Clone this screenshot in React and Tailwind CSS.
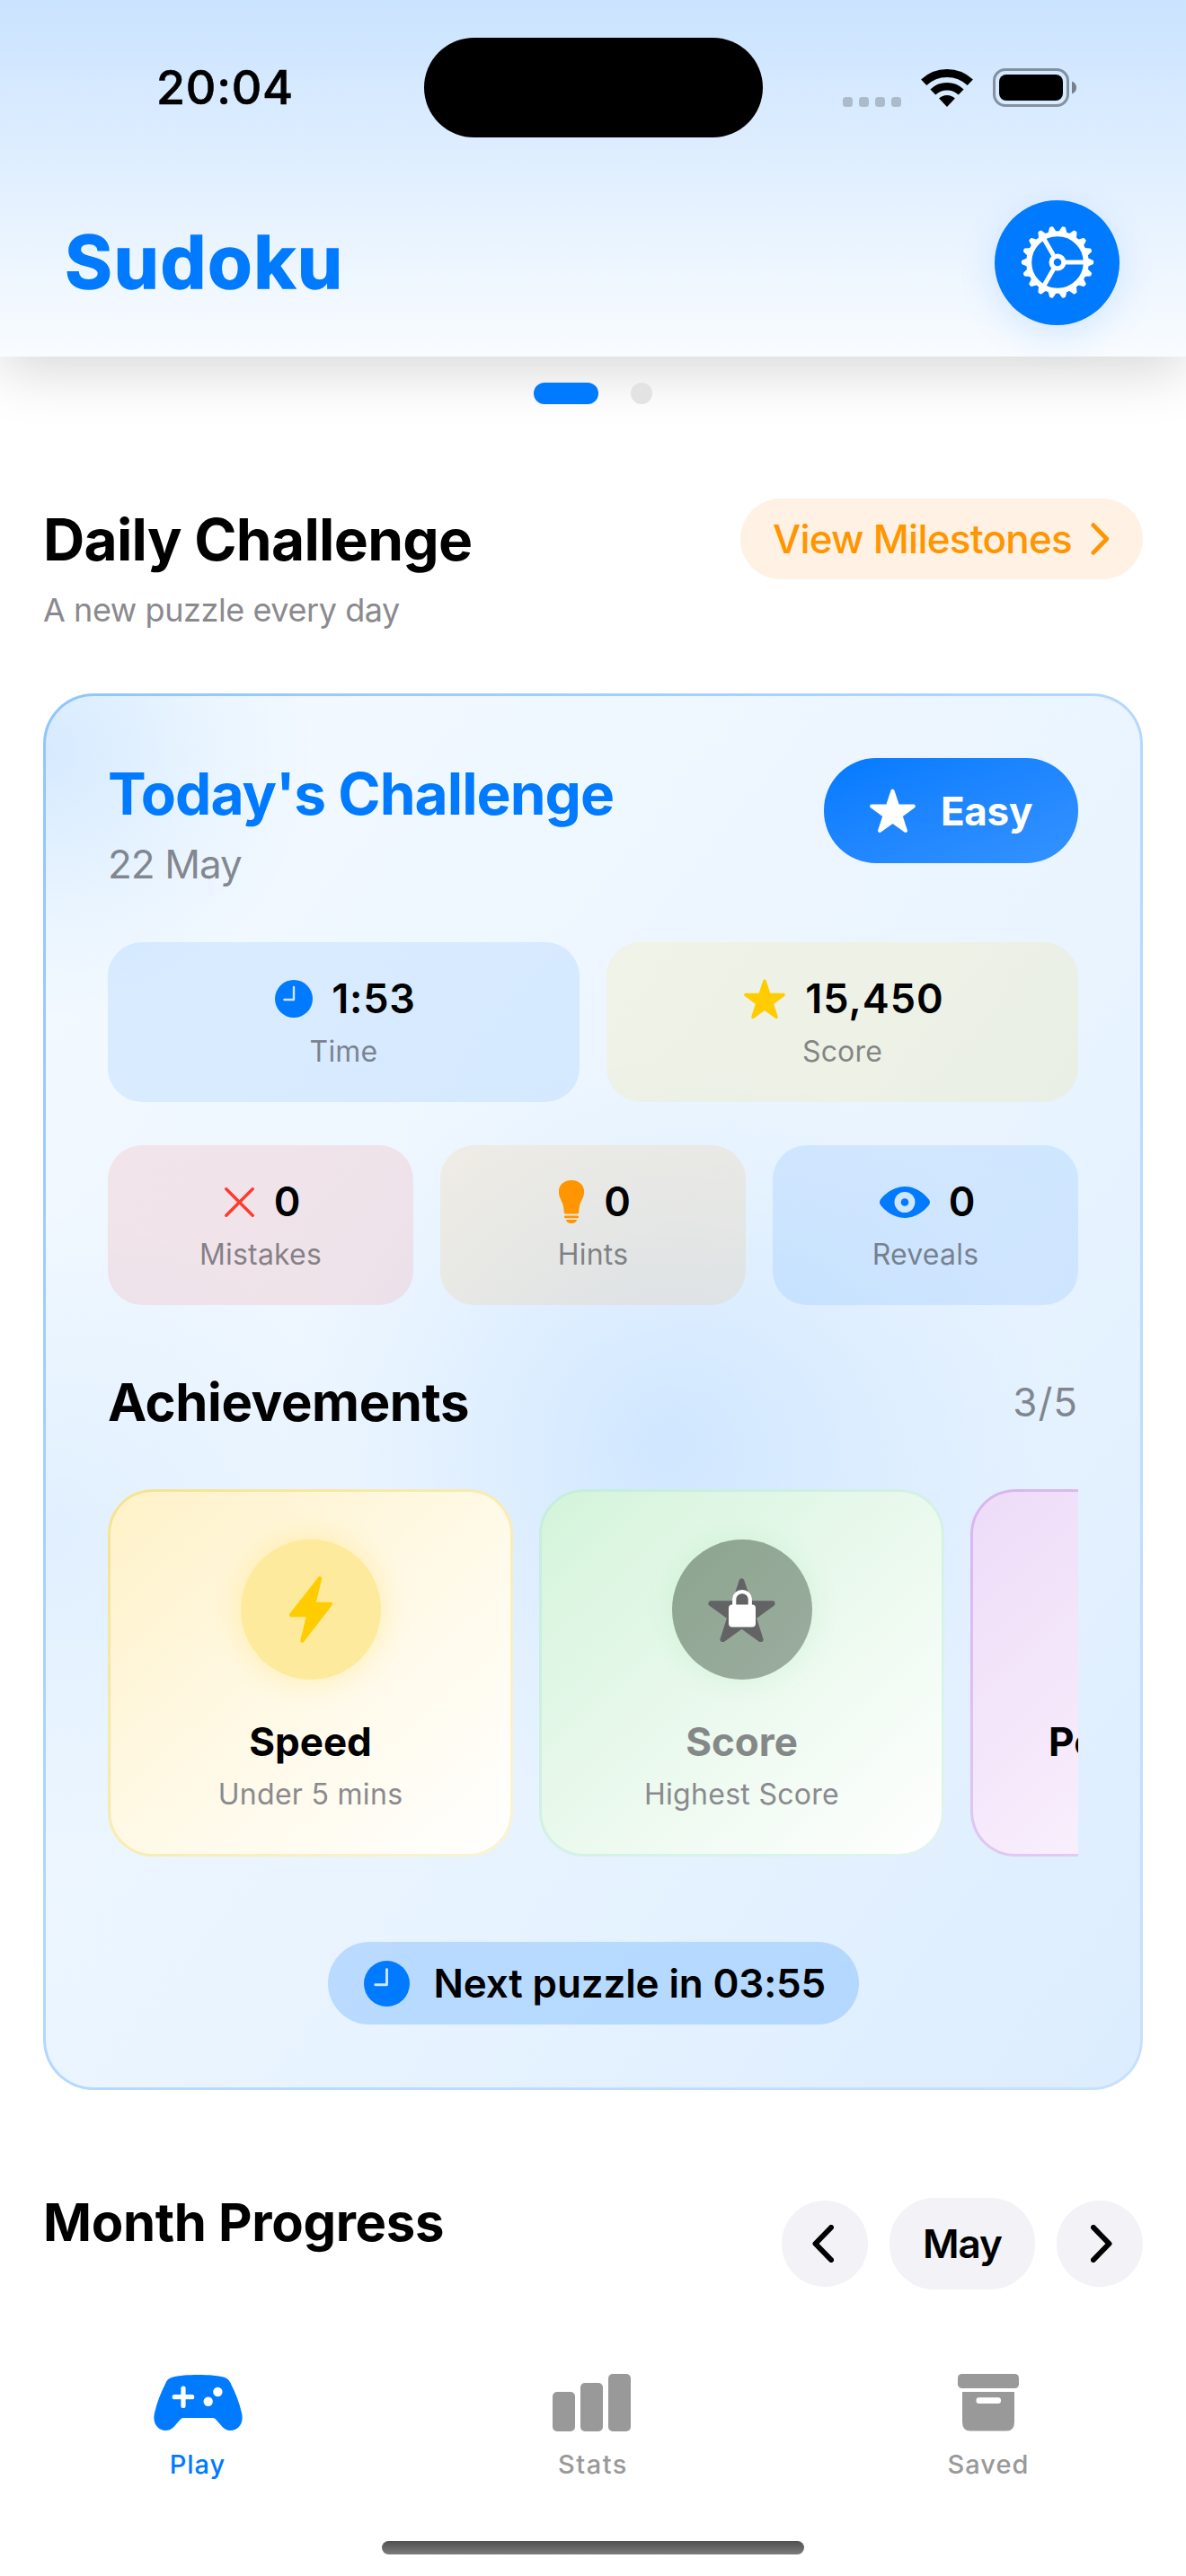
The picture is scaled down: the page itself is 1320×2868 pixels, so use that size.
import React from "react";

function Star({ className }) {
  const pts = Array.from({ length: 10 }, (_, i) => {
    const r = i % 2 ? 18.5 : 48;
    const a = (Math.PI / 5) * i - Math.PI / 2;
    return `${(50 + r * Math.cos(a)).toFixed(2)},${(52.6 + r * Math.sin(a)).toFixed(2)}`;
  }).join(" ");
  return (
    <svg viewBox="0 0 100 95" className={className} fill="currentColor" stroke="currentColor" strokeWidth="8" strokeLinejoin="round">
      <polygon points={pts} />
    </svg>
  );
}

function Gear() {
  const teeth = Array.from({ length: 18 }, (_, i) => i * 20);
  return (
    <svg viewBox="-42 -42 84 84" className="size-[84px] text-white" fill="none" stroke="currentColor">
      <circle r="31.8" strokeWidth="6" />
      <circle r="6.9" strokeWidth="5.2" />
      {[0, 120, 240].map((a) => (
        <path key={a} d="M9 0H31" strokeWidth="5" transform={`rotate(${a})`} />
      ))}
      {teeth.map((a) => (
        <path key={a} d="M33 -3.6L38.8 -1V1L33 3.6Z" fill="currentColor" strokeWidth="2.6" strokeLinejoin="round" transform={`rotate(${a})`} />
      ))}
    </svg>
  );
}

function Clock({ className }) {
  return (
    <svg viewBox="0 0 42 42" className={className}>
      <circle cx="21" cy="21" r="21" fill="#007aff" />
      <path d="M21 8V22H10.5" fill="none" stroke="#cfe6ff" strokeWidth="2.4" strokeLinecap="round" strokeLinejoin="round" />
    </svg>
  );
}

function Cross() {
  return (
    <svg viewBox="0 0 33 33" className="size-[33px]" stroke="#ff3b30" strokeWidth="3.4" strokeLinecap="round">
      <path d="M1.8 1.8L31.2 31.2M31.2 1.8L1.8 31.2" />
    </svg>
  );
}

function Bulb() {
  return (
    <svg viewBox="0 0 28 48" className="h-12 w-7 -my-2" fill="#ff9500">
      <path d="M14 0C22.5 0 28.2 5.6 28.200 13C28 19.500 24.500 22.500 23.200 28C22.300 32 22.400 34 22.200 36Q22 37.400 20.700 37.400H7.300Q6 37.400 5.800 36C5.600 34 5.700 32 4.800 28C3.500 22.500 0 19.500 -0.200 13C-0.200 5.600 5.500 0 14 0Z" />
      <rect x="6" y="39.400" width="16" height="2.800" rx="1.200" />
      <path d="M7.800 44H20.200Q19 48 14 48T7.800 44Z" />
    </svg>
  );
}

function Eye() {
  return (
    <svg viewBox="0 0 56 35" className="h-[35px] w-14" fill="#007aff" fillRule="evenodd">
      <path d="M28 0C42 0 51.500 10 55 14.500Q57 17.500 55 20.500C51.500 25 42 35 28 35S4.500 25 1 20.500Q-1 17.500 1 14.500C4.500 10 14 0 28 0ZM28 6A11.500 11.500 0 1 0 28 29A11.500 11.500 0 1 0 28 6Z" />
      <circle cx="28" cy="17.500" r="4.300" />
    </svg>
  );
}

function Bolt() {
  return (
    <svg viewBox="0 0 48 74" className="h-[74px] w-12" fill="#ffcc00" stroke="#ffcc00" strokeWidth="4.500" strokeLinejoin="round">
      <path d="M34 2.500L27 31H45.700L14.500 71.500L21.500 43H2.300Z" />
    </svg>
  );
}

function LockedStar() {
  return (
    <div className="grid place-items-center text-[#636366] [&>*]:[grid-area:1/1]">
      <Star className="h-[71px] w-[75px]" />
      <svg viewBox="0 0 30 42" className="h-[42px] w-[30px] -mt-0.5">
        <rect y="16.500" width="30" height="25" rx="4" fill="#fff" />
        <path d="M6.200 18V11C6.200 -0.800 23.800 -0.800 23.800 11V18" fill="none" stroke="#fff" strokeWidth="4.200" />
      </svg>
    </div>
  );
}

function StatusIcons() {
  return (
    <div className="flex items-center">
      <div className="mt-[31px] flex gap-[7px]">
        {[0, 1, 2, 3].map((i) => (
          <span key={i} className="size-[11px] rounded-[3.500px] bg-black/20" />
        ))}
      </div>
      <svg viewBox="0 0 58 42" className="ml-[22px] h-[42px] w-[58px]" fill="none" stroke="#000">
        <path d="M3.200 14.800A37.500 37.500 0 0 1 54.800 14.800" strokeWidth="9" />
        <path d="M13.300 25.500A22.800 22.800 0 0 1 44.700 25.500" strokeWidth="8.400" />
        <path d="M29 42L20.100 32.600A13 13 0 0 1 37.900 32.600Z" fill="#000" stroke="none" />
      </svg>
      <svg viewBox="0 0 94 43" className="ml-[22px] h-[43px] w-[94px]">
        <rect x="1.500" y="1.500" width="82" height="40" rx="12.500" fill="none" stroke="#000" strokeOpacity=".38" strokeWidth="3" />
        <rect x="7" y="7" width="71" height="29" rx="8" fill="#000" />
        <path d="M88 14.500Q93 16.500 93 21.500T88 28.500Z" fill="#000" fillOpacity=".45" />
      </svg>
    </div>
  );
}

function Chevron({ left, className }) {
  return (
    <svg viewBox="0 0 24 42" className={className} fill="none" stroke="currentColor" strokeLinecap="round" strokeLinejoin="round">
      <path d={left ? "M21 3L3.500 21L21 39" : "M3 3L20.500 21L3 39"} />
    </svg>
  );
}

function Tile({ icon, value, label, color, gap = "gap-[21px]", ls = "tracking-normal" }) {
  return (
    <div className={`flex h-[178px] flex-1 flex-col items-center rounded-[38px] pt-9 ${color}`}>
      <div className={`flex h-[54px] items-center pl-1 ${gap}`}>
        {icon}
        <span className={`text-[45px] leading-[54px] font-semibold ${ls}`}>{value}</span>
      </div>
      <div className="mt-3 text-[32px] leading-10 tracking-[0.2px] text-[#3c3c43]/60">{label}</div>
    </div>
  );
}

function Badge({ frame, card, circle, icon, title, text, titleColor = "text-black" }) {
  return (
    <div className={`h-[409px] w-[451px] shrink-0 rounded-[50px] p-[3px] ${frame}`}>
      <div className={`flex h-full flex-col items-center rounded-[47px] pt-[53px] ${card}`}>
        <div className={`grid size-[156px] shrink-0 place-items-center rounded-full ${circle}`}>{icon}</div>
        <div className={`mt-[41px] text-[44px] leading-[56px] font-bold whitespace-nowrap ${titleColor}`}>{title}</div>
        <div className="mt-[11px] text-[32px] leading-10 tracking-[0.3px] whitespace-nowrap text-[#8a8a8e]">{text}</div>
      </div>
    </div>
  );
}

function Header() {
  return (
    <header className="relative z-10 h-[397px] bg-linear-to-b from-[#cae3ff] to-[#f9fcff] shadow-[0_15px_60px_rgba(0,0,0,0.16)]">
      <div className="flex h-[195px] items-center pr-[121px] pl-[174px]">
        <div className="w-[298px] text-[52px] leading-[60px] font-medium tracking-[0.76px] [-webkit-text-stroke:0.600px_#000]">20:04</div>
        <div className="h-[111px] w-[377px] rounded-full bg-black" />
        <div className="ml-auto"><StatusIcons /></div>
      </div>
      <div className="flex h-[194px] items-center justify-between px-[74px]">
        <h1 className="-ml-[2px] text-[81px] leading-[96px] font-bold tracking-[1.500px] text-[#007aff] [-webkit-text-stroke:1.500px_#007aff]">Sudoku</h1>
        <button className="grid size-[139px] place-items-center rounded-full bg-[#007aff] shadow-[0_12px_44px_rgba(0,122,255,0.14)]">
          <Gear />
        </button>
      </div>
    </header>
  );
}

function TodayCard() {
  return (
    <section className="mt-[71px] h-[1555px] rounded-[56px] bg-linear-to-br from-[#8fc5ff] via-[#b4d8ff] to-[#c6e1ff] p-[3px]">
      <div className="h-full rounded-[53px] px-[69px] pt-[69px] [background:radial-gradient(circle_300px_at_0_60px,rgba(0,122,255,0.12),rgba(0,122,255,0.03)_65%,transparent),radial-gradient(circle_430px_at_690px_830px,rgba(0,122,255,0.11),rgba(0,122,255,0.03)_65%,transparent),radial-gradient(circle_360px_at_0_930px,rgba(0,122,255,0.06),transparent),linear-gradient(to_bottom_right,#f4faff,#ebf5ff_50%,#dcedff)]">
        <div className="flex h-[205px] items-start justify-between">
          <div>
            <h3 className="mt-[2px] text-[64px] leading-[76px] font-bold tracking-[-0.970px] text-[#007aff]">Today's Challenge</h3>
            <div className="mt-[14px] text-[44px] leading-[52px] tracking-[-0.970px] text-[#3c3c43]/60">22 May</div>
          </div>
          <div className="flex h-[117px] w-[283px] items-center justify-center gap-7 rounded-[58px] bg-linear-to-br from-[#007aff] to-[#3392ff] text-white">
            <Star className="h-[49px] w-[51px]" />
            <span className="text-[44px] leading-[52px] font-bold tracking-[-0.300px]">Easy</span>
          </div>
        </div>

        <div className="flex gap-[30px]">
          <Tile icon={<Clock className="size-[42px]" />} value="1:53" label="Time" color="bg-[#007aff]/10" ls="tracking-[0.800px]" />
          <Tile icon={<Star className="h-[44px] w-[46px] text-[#ffcc00]" />} value="15,450" label="Score" color="bg-[#ffcc00]/10" gap="gap-[22px]" ls="tracking-[1px]" />
        </div>
        <div className="mt-12 flex gap-[30px]">
          <Tile icon={<Cross />} value="0" label="Mistakes" color="bg-[#ff3b30]/10" gap="gap-[22px]" />
          <Tile icon={<Bulb />} value="0" label="Hints" color="bg-[#ff9500]/10" gap="gap-[22px]" />
          <Tile icon={<Eye />} value="0" label="Reveals" color="bg-[#007aff]/10" />
        </div>

        <div className="mt-[72px] flex items-center justify-between">
          <h3 className="text-[58px] leading-[72px] font-bold tracking-[-0.370px]">Achievements</h3>
          <span className="text-[44px] leading-[52px] tracking-[1px] text-[#3c3c43]/60">3/5</span>
        </div>
        <div className="mt-[61px] flex gap-[29px] overflow-hidden">
          <Badge
            frame="bg-linear-to-br from-[#f6e38f] to-[#fbf4d2]"
            card="bg-linear-to-br from-[#fff2c8] via-[#fff9e6] to-white"
            circle="bg-[#feea9c] shadow-[0_0_32px_rgba(255,214,40,0.3)]"
            icon={<Bolt />}
            title="Speed"
            text="Under 5 mins"
          />
          <Badge
            frame="bg-linear-to-br from-[#c5eddc] to-[#e0f5ee]"
            card="bg-linear-to-br from-[#d4f4db] via-[#eaf9ed] to-white"
            circle="bg-linear-to-br from-[#8ca68f] to-[#9cac9f] shadow-[0_0_32px_rgba(52,199,89,0.1)]"
            icon={<LockedStar />}
            title="Score"
            text="Highest Score"
            titleColor="text-[#848888]"
          />
          <Badge
            frame="bg-linear-to-br from-[#d8b5f2] to-[#e8d6f6]"
            card="bg-linear-to-br from-[#eedcf8] via-[#f6eafb] to-white"
            circle="bg-[#dfbdf2]"
            title="Perfectionist"
          />
        </div>

        <div className="mx-auto mt-[95px] flex h-[92px] w-[591px] items-center gap-[27px] rounded-[46px] bg-[#007aff]/20 pl-10">
          <Clock className="size-[51px]" />
          <span className="text-[44px] leading-[52px] font-semibold tracking-[-0.150px]">Next puzzle in 03:55</span>
        </div>
      </div>
    </section>
  );
}

function TabBar() {
  return (
    <nav className="mt-[94px] grid grid-cols-3 text-[29px] leading-[38px] font-medium tracking-[1px] text-[#999]">
      <div className="flex flex-col items-center text-[#007aff]">
        <svg viewBox="0 0 99 62" className="my-px h-[62px] w-[99px]">
          <path d="M49.500 0C61 0 70 0.800 76.500 2.300C81 3.300 83.500 5 85.500 9C91 20 95.500 31 98 42.500C101 55 93 62 86 62C82 62 80 61 77 58.500L69.500 50Q68 48 66 48H33Q31 48 29.500 50L22 58.500C19 61 17 62 13 62C6 62 -2 55 1 42.500C3.500 31 8 20 13.500 9C15.500 5 18 3.300 22.500 2.300C29 0.800 38 0 49.500 0Z" fill="#007aff" />
          <path d="M33 15V34.500M23.200 24.700H42.700" stroke="#fff" strokeWidth="5.200" strokeLinecap="round" />
          <circle cx="60.700" cy="29.700" r="5.200" fill="#fff" />
          <circle cx="71.400" cy="19" r="5.200" fill="#fff" />
        </svg>
        <span className="mt-[18px]">Play</span>
      </div>
      <div className="flex flex-col items-center">
        <div className="mr-[3px] flex h-16 items-end gap-[6px]">
          <span className="h-11 w-[25px] rounded-[5px] bg-[#999]" />
          <span className="h-[54px] w-[25px] rounded-[5px] bg-[#999]" />
          <span className="h-16 w-[25px] rounded-[5px] bg-[#999]" />
        </div>
        <span className="mt-[18px] tracking-[1.500px]">Stats</span>
      </div>
      <div className="flex flex-col items-center">
        <svg viewBox="0 0 68 64" className="h-16 w-[68px]" fill="#999">
          <rect width="68" height="16" rx="4.500" />
          <path d="M5 20H63V53.500Q63 63.500 54 63.500H14Q5 63.500 5 53.500Z" />
          <rect x="20.500" y="26.300" width="27.500" height="6.800" rx="3" fill="#fff" />
        </svg>
        <span className="mt-[18px]">Saved</span>
      </div>
    </nav>
  );
}

export default function App() {
  return (
    <div className="h-[2868px] w-[1320px] overflow-hidden bg-white font-[Inter,sans-serif] text-black">
      <Header />
      <div className="relative z-20 flex justify-center gap-9 pt-[29px]">
        <span className="h-6 w-[72px] rounded-full bg-[#007aff]" />
        <span className="size-6 rounded-full bg-[#e3e3e3]" />
      </div>
      <main className="px-12 pt-[105px]">
        <div className="flex items-start justify-between">
          <div>
            <h2 className="mt-[6px] text-[64px] leading-[80px] font-bold tracking-[-0.700px]">Daily Challenge</h2>
            <p className="mt-4 text-[36px] leading-[44px] tracking-[-0.430px] text-[#8a8a8e]">A new puzzle every day</p>
          </div>
          <div className="flex h-[90px] w-[448px] items-center rounded-[45px] bg-[#fff2e4] pl-[36px] text-[#ff9500]">
            <span className="text-[44px] leading-[52px] font-medium tracking-[-0.780px]">View Milestones</span>
            <Chevron className="ml-[20px] h-[36px] w-[23px] stroke-[5.500px]" />
          </div>
        </div>
        <TodayCard />
        <div className="mt-[111px] flex h-[111px] justify-between">
          <h2 className="text-[58px] leading-[72px] font-bold tracking-[-0.320px]">Month Progress</h2>
          <div className="mt-[9px] flex h-[102px] items-center gap-6">
            <button className="grid size-24 place-items-center rounded-full bg-[#f2f2f7]">
              <Chevron left className="mr-1 h-[42px] w-6 stroke-[6px]" />
            </button>
            <span className="flex h-[102px] w-[162px] items-center justify-center rounded-[50px] bg-[#f2f2f7] text-[44px] leading-[52px] font-semibold tracking-[-1px]">May</span>
            <button className="grid size-24 place-items-center rounded-full bg-[#f2f2f7]">
              <Chevron className="ml-1 h-[42px] w-6 stroke-[6px]" />
            </button>
          </div>
        </div>
      </main>
      <TabBar />
      <div className="mx-auto mt-[66px] h-[15px] w-[470px] rounded-full bg-linear-to-b from-[#505050] to-[#7c7c7c]" />
    </div>
  );
}
